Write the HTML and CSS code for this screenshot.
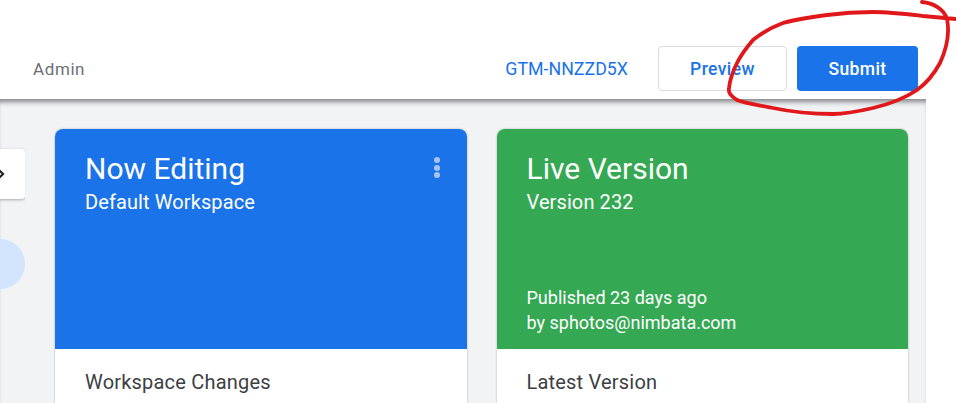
FILE: index.html
```html
<!DOCTYPE html>
<html lang="en">
<head>
<meta charset="utf-8">
<title>Workspace</title>
<link rel="stylesheet" href="styles.css">
</head>
<body>
<div class="app">
  <header class="topbar">
    <span class="admin">Admin</span>
    <span class="container-id">GTM-NNZZD5X</span>
    <button class="btn btn-preview">Preview</button>
    <button class="btn btn-submit">Submit</button>
  </header>
  <main class="content">
    <aside class="rail">
      <div class="rail-button">
        <svg class="chevron" width="10" height="14" viewBox="0 0 10 14"><path d="M1.5 1.5 7 7l-5.500 5.500" fill="none" stroke="#202124" stroke-width="2.200"/></svg>
      </div>
      <div class="rail-pill"></div>
    </aside>
    <section class="card">
      <div class="card-head card-blue">
        <div class="card-titles">
          <h2 class="card-title">Now Editing</h2>
          <p class="card-sub">Default Workspace</p>
        </div>
        <div class="kebab"><i></i><i></i><i></i></div>
      </div>
      <div class="card-body">Workspace Changes</div>
    </section>
    <section class="card">
      <div class="card-head card-green">
        <div class="card-titles">
          <h2 class="card-title">Live Version</h2>
          <p class="card-sub">Version 232</p>
        </div>
        <p class="card-meta">Published 23 days ago<br>by sphotos@nimbata.com</p>
      </div>
      <div class="card-body">Latest Version</div>
    </section>
  </main>
</div>
<svg class="ink" width="956" height="403" viewBox="0 0 956 403">
  <path d="M922 2C933 3 944 9 947 19C950 34 946 50 940 63C934 74 927 83 917 90C905 98 890 104 873 108C860 111 846 114 833 114C812 114 792 112 773 108C760 105 747 104 737 100C731 96 728 93 729 88C730 79 733 71 737 63C741 55 747 47 753 40C762 33 772 27 783 23C797 19 812 17 827 15C842 13 858 12 873 12C890 12 906 14 923 16L956 19" fill="none" stroke="#e0181c" stroke-width="3.800" stroke-linecap="round" stroke-linejoin="round"/>
</svg>
</body>
</html>
```
FILE: styles.css
```css
* { box-sizing: border-box; }
html, body { margin: 0; height: 100%; }
body {
  width: 956px;
  height: 403px;
  overflow: hidden;
  background: #fff;
  font-family: Roboto, "Liberation Sans", sans-serif;
  position: relative;
}
.app { width: 926px; height: 403px; display: flex; flex-direction: column; }
.topbar {
  height: 99px;
  flex: none;
  display: flex;
  align-items: flex-start;
  padding: 46px 8px 0 33px;
  background: #fff;
}
.admin { font-size: 17px; line-height: 47px; color: #6b6f73; letter-spacing: .6px; margin-right: auto; }
.container-id { font-size: 17.800px; line-height: 45px; color: #1a73e8; margin-right: 30px; }
.btn {
  height: 45px;
  border-radius: 4px;
  font: 500 17.500px Roboto, sans-serif;
  letter-spacing: .4px;
  padding: 0;
}
.btn-preview { width: 129px; background: #fff; color: #1a73e8; border: 1px solid #dadce0; margin-right: 10px; }
.btn-submit { width: 121px; background: #1a73e8; color: #fff; border: 0; }
.content {
  flex: 1;
  background: #f1f3f4;
  box-shadow: inset 0 6px 5px -3px rgba(60, 64, 67, .6);
  display: flex;
  gap: 30px;
  padding: 30px 18px 0 0;
  min-height: 0;
  overflow: hidden;
}
.rail {
  width: 25px;
  flex: none;
  padding-top: 20px;
  display: flex;
  flex-direction: column;
  align-items: flex-end;
  gap: 40px;
  overflow: hidden;
  padding-bottom: 4px;
}
.rail-button {
  flex: none;
  width: 50px;
  height: 50px;
  background: #fff;
  border-radius: 4px;
  box-shadow: 0 1px 3px rgba(60, 64, 67, .4);
  display: flex;
  align-items: center;
  justify-content: flex-end;
  padding-right: 19px;
}
.rail-pill { flex: none; width: 50px; height: 50px; border-radius: 50%; background: #d2e3fc; }
.card {
  flex: 1;
  min-width: 0;
  background: #fff;
  border-radius: 8px 8px 0 0;
  box-shadow: 0 0 2px rgba(60, 64, 67, .45);
  overflow: hidden;
}
.card-head {
  height: 220px;
  padding: 22px 30px 0 30px;
  color: #fff;
  display: flex;
  position: relative;
}
.card-blue { background: #1a73e8; justify-content: space-between; }
.card-green { background: #34a853; flex-direction: column; justify-content: space-between; padding-bottom: 14px; }
.card-title { margin: 0; font-size: 30px; line-height: 36px; font-weight: 400; }
.card-sub { margin: 0; font-size: 20px; line-height: 30px; font-weight: 400; letter-spacing: .1px; }
.card-meta { margin: 0; font-size: 18px; line-height: 25px; }
.kebab { display: flex; flex-direction: column; gap: 1.500px; padding-top: 6px; margin-right: -3px; }
.kebab i { display: block; width: 6px; height: 6px; border-radius: 50%; background: #a9c4f0; }
.card-body { padding: 20px 30px; font-size: 20px; line-height: 26px; color: #3c4043; letter-spacing: .2px; }
.ink { position: absolute; left: 0; top: 0; pointer-events: none; z-index: 2; }
```
